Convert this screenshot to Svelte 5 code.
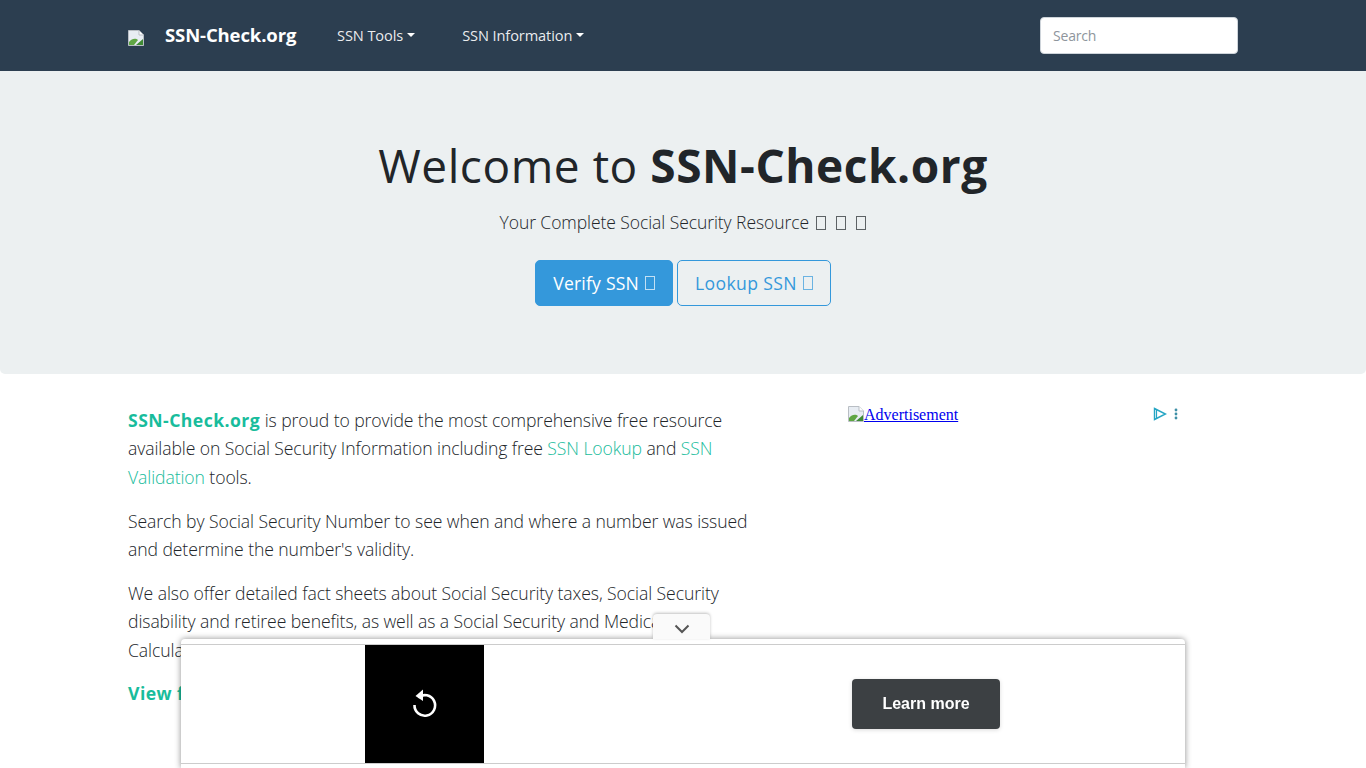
<script>
	const navItems = ['SSN Tools', 'SSN Information'];
</script>

{#snippet broken()}
	<svg class="broken" width="16" height="16" viewBox="0 0 16 16" aria-hidden="true">
		<path d="M0.5 0.5H11L15.5 5V15.5H0.5Z" fill="#e8edf3" stroke="#b9bec4" />
		<path d="M11 0.5V5H15.5" fill="#fff" stroke="#b9bec4" />
		<path d="M1 15V12C4 8 8 8 10 10L6 15Z" fill="#5fa644" />
		<path d="M8 15L15 9V15Z" fill="#3f8a34" />
	</svg>
{/snippet}

<nav class="navbar">
	<div class="container nav-inner">
		<a class="brand" href="#top">
			<span class="brand-img">{@render broken()}</span>
			SSN-Check.org
		</a>
		<ul class="nav-list">
			{#each navItems as item}
				<li><a href="#top">{item}<span class="caret"></span></a></li>
			{/each}
		</ul>
		<input class="search" type="text" placeholder="Search" />
	</div>
</nav>

<header class="hero">
	<h1>Welcome to <b>SSN-Check.org</b></h1>
	<p class="lead">Your Complete Social Security Resource <i class="tofu"></i><i class="tofu"></i><i class="tofu"></i></p>
	<div class="actions">
		<a class="btn primary" href="#top">Verify SSN <i class="tofu"></i></a>
		<a class="btn outline" href="#top">Lookup SSN <i class="tofu"></i></a>
	</div>
</header>

<main class="container content">
	<section class="copy">
		<p><a class="strong" href="#top">SSN-Check.org</a> is proud to provide the most comprehensive free resource available on Social Security Information including free <a href="#top">SSN Lookup</a> and <a href="#top">SSN Validation</a> tools.</p>
		<p>Search by Social Security Number to see when and where a number was issued and determine the number's validity.</p>
		<p>We also offer detailed fact sheets about Social Security taxes, Social Security disability and retiree benefits, as well as a Social Security and Medicare Tax Calculator.</p>
		<p class="more"><a class="strong" href="#top">View fact sheets</a></p>
	</section>
	<aside class="ad">
		<a class="ad-link" href="#top">{@render broken()}Advertisement</a>
		<span class="ad-icons">
			<svg width="14" height="14" viewBox="0 0 14 14" aria-hidden="true">
				<path d="M1.5 1.5L12.5 7L1.5 12.5Z" fill="none" stroke="#25a5c4" stroke-width="1.4" />
				<path d="M3.5 2.5V11.5" stroke="#25a5c4" stroke-width="1.2" />
			</svg>
			<svg width="6" height="14" viewBox="0 0 6 14" aria-hidden="true">
				<circle cx="3" cy="3" r="1.4" fill="#3d8fa6" />
				<circle cx="3" cy="7" r="1.4" fill="#3d8fa6" />
				<circle cx="3" cy="11" r="1.4" fill="#3d8fa6" />
			</svg>
		</span>
	</aside>
</main>

<div class="anchor-ad">
	<button class="collapse" aria-label="Collapse">
		<svg width="16" height="10" viewBox="0 0 16 10" aria-hidden="true">
			<path d="M1.5 1.5L8 8L14.500 1.500" fill="none" stroke="#555" stroke-width="2" />
		</svg>
	</button>
	<div class="ad-frame">
		<div class="video">
			<svg width="30" height="32" viewBox="0 0 30 32" aria-hidden="true">
				<path d="M9.200 10.500A10.300 10.300 0 1 1 5.500 18" fill="none" stroke="#fff" stroke-width="2.600" />
				<path d="M14 2.500V14L6.500 9Z" fill="#fff" />
			</svg>
		</div>
		<div class="cta-wrap">
			<a class="cta" href="#top">Learn more</a>
		</div>
	</div>
</div>

<style>
	:global(body) {
		font-family: 'Open Sans', 'Noto Sans', sans-serif;
		color: #212529;
		background: #fff;
		overflow: hidden;
	}

	.container {
		width: 1110px;
		margin: 0 auto;
	}

	.navbar {
		background: #2c3e50;
		height: 71px;
	}

	.nav-inner {
		display: flex;
		align-items: center;
		height: 100%;
	}

	.brand {
		display: flex;
		align-items: center;
		color: #fff;
		font-size: 18.5px;
		font-weight: 700;
		letter-spacing: -0.12px;
		text-decoration: none;
		width: 209px;
		flex: none;
		margin-bottom: 2px;
	}

	.brand-img {
		display: flex;
		width: 37px;
		padding-top: 6px;
	}

	.nav-list {
		display: flex;
		gap: 47px;
		list-style: none;
		margin: 0 0 2px;
		padding: 0;
		flex: 1;
	}

	.nav-list a {
		color: rgba(255, 255, 255, 0.92);
		font-size: 14.6px;
		letter-spacing: -0.1px;
		text-decoration: none;
		display: flex;
		align-items: center;
	}

	.caret {
		margin-left: 4px;
		border-top: 4.5px solid #fff;
		border-left: 4.5px solid transparent;
		border-right: 4.5px solid transparent;
	}

	.search {
		width: 198px;
		height: 37px;
		box-sizing: border-box;
		border: 1px solid #ced4da;
		border-radius: 4px;
		padding: 0 12px;
		font: inherit;
		font-size: 14px;
		letter-spacing: -0.2px;
		outline: none;
	}

	.search::placeholder {
		color: #8e959c;
	}

	.hero {
		background: #ecf0f1;
		height: 303px;
		box-sizing: border-box;
		padding-top: 64px;
		text-align: center;
		border-radius: 0 0 5px 5px;
	}

	h1 {
		margin: 0;
		font-size: 46px;
		line-height: 60px;
		font-weight: 400;
		letter-spacing: 0.55px;
	}

	h1 b {
		font-weight: 700;
	}

	.lead {
		margin: 13px 0 0;
		font-size: 17.5px;
		line-height: 28px;
		font-weight: 300;
		letter-spacing: -0.07px;
	}

	.tofu {
		display: inline-block;
		box-sizing: border-box;
		width: 10px;
		height: 14px;
		border: 1px solid currentColor;
		opacity: 0.7;
		margin-left: 10px;
		vertical-align: -1px;
	}

	.tofu:first-child {
		margin-left: 3px;
	}

	.actions {
		display: flex;
		justify-content: center;
		gap: 4px;
		margin-top: 24px;
	}

	.btn {
		box-sizing: border-box;
		height: 46px;
		display: flex;
		align-items: center;
		padding: 0 17px;
		border: 1px solid #3498db;
		border-radius: 5px;
		font-size: 17.600px;
		letter-spacing: 0.2px;
		text-decoration: none;
	}

	.btn .tofu {
		margin-left: 6px;
		vertical-align: baseline;
	}

	.primary {
		background: #3498db;
		color: #fff;
	}

	.outline {
		color: #3498db;
		letter-spacing: 0.35px;
	}

	.content {
		display: flex;
		justify-content: space-between;
		padding-top: 32.2px;
	}

	.copy {
		width: 622px;
		font-size: 17.600px;
		line-height: 28.2px;
		font-weight: 300;
		letter-spacing: -0.09px;
	}

	.copy p {
		margin: 0 0 16px;
	}

	.copy .more {
		margin-top: -1px;
	}

	.copy a {
		color: #18bc9c;
		text-decoration: none;
	}

	.copy .strong {
		font-weight: 700;
		letter-spacing: 0.45px;
	}

	.ad {
		width: 332px;
		margin-right: 58px;
		display: flex;
		justify-content: space-between;
		height: 20px;
	}

	.ad-link {
		font-family: 'Liberation Serif', serif;
		font-size: 16px;
		line-height: 18px;
		color: #00e;
		display: flex;
		align-items: flex-start;
	}

	.ad-icons {
		display: flex;
		align-items: center;
		gap: 6px;
		padding-right: 1px;
		height: 16px;
	}

	.anchor-ad {
		position: fixed;
		left: 181px;
		bottom: 0;
		width: 1004px;
		height: 129px;
		background: #fff;
		border-radius: 4px 4px 0 0;
		box-shadow: 0 0 6px rgba(0, 0, 0, 0.45);
	}

	.collapse {
		position: absolute;
		top: -25px;
		left: 472px;
		width: 57px;
		height: 25px;
		padding: 0;
		border: none;
		background: #fafafa;
		border-radius: 4px 4px 0 0;
		box-shadow: 0 -1px 3px rgba(0, 0, 0, 0.25);
		display: flex;
		align-items: center;
		justify-content: center;
		padding-top: 4px;
	}

	.ad-frame {
		display: flex;
		height: 118px;
		margin-top: 5px;
		border-top: 1px solid #ccc;
		border-bottom: 1px solid #ccc;
	}

	.video {
		width: 119px;
		margin-left: 184px;
		background: #000;
		display: flex;
		align-items: center;
		justify-content: center;
		flex: none;
	}

	.video svg {
		margin: 0 2px 2px 0;
	}

	.cta-wrap {
		display: flex;
		align-items: center;
		padding-left: 368px;
	}

	.cta {
		width: 148px;
		height: 50px;
		display: flex;
		align-items: center;
		justify-content: center;
		background: #3c4043;
		color: #fff;
		border-radius: 4px;
		font-family: 'Liberation Sans', sans-serif;
		font-size: 16px;
		font-weight: 700;
		text-decoration: none;
		box-shadow: 0 1px 4px rgba(0, 0, 0, 0.15);
	}
</style>
